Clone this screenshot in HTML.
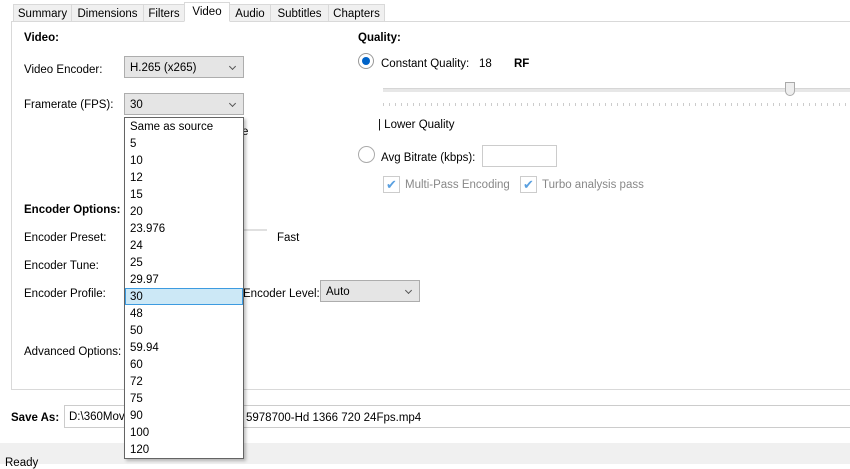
<!DOCTYPE html>
<html><head><style>
body{margin:0;width:850px;height:464px;background:#fff;font-family:"Liberation Sans",sans-serif;font-size:11.5px;color:#000;position:relative;overflow:hidden}
.a{position:absolute;white-space:nowrap}
.t{transform:translateY(2px)}
.tab{position:absolute;top:4px;height:17px;border:1px solid #d9d9d9;border-bottom:none;background:#f0f0f0;line-height:18px;text-align:center;box-sizing:border-box}
.sel{background:#fff;top:2px;height:20px;border-color:#d9d9d9}
.combo{position:absolute;height:22px;border:1px solid #adadad;background:#e5e5e5;box-sizing:border-box;line-height:22px;padding-left:5px}
.combo:after{content:"";position:absolute;right:8px;top:7px;width:4px;height:4px;border-right:1px solid #555;border-bottom:1px solid #555;transform:rotate(45deg)}
b{font-weight:bold}
.it{height:17px;line-height:18px;padding-left:5px;box-sizing:border-box}
</style></head><body>
<div class="a" style="left:11px;top:21px;width:850px;height:369px;border:1px solid #d9d9d9;box-sizing:border-box"></div>
<div class="tab" style="left:13px;width:59px">Summary</div>
<div class="tab" style="left:71px;width:73px">Dimensions</div>
<div class="tab" style="left:143px;width:42px">Filters</div>
<div class="tab sel" style="left:184px;width:46px;border-bottom:1px solid #fff">Video</div>
<div class="tab" style="left:229px;width:42px">Audio</div>
<div class="tab" style="left:270px;width:59px">Subtitles</div>
<div class="tab" style="left:328px;width:57px">Chapters</div>

<div class="a t" style="left:24px;top:30px"><b>Video:</b></div>
<div class="a t" style="left:24px;top:62px">Video Encoder:</div>
<div class="combo" style="left:124px;top:56px;width:120px">H.265 (x265)</div>
<div class="a t" style="left:24px;top:97px">Framerate (FPS):</div>
<div class="combo" style="left:124px;top:93px;width:120px">30</div>
<div class="a t" style="left:242px;top:124px">e</div>

<div class="a t" style="left:24px;top:202px"><b>Encoder Options:</b></div>
<div class="a t" style="left:24px;top:230px">Encoder Preset:</div>
<div class="a" style="left:243px;top:229px;width:24px;height:2px;background:#e0e0e0"></div>
<div class="a t" style="left:277px;top:230px">Fast</div>
<div class="a t" style="left:24px;top:258px">Encoder Tune:</div>
<div class="a t" style="left:24px;top:286px">Encoder Profile:</div>
<div class="a t" style="left:243px;top:286px">Encoder Level:</div>
<div class="combo" style="left:320px;top:280px;width:100px">Auto</div>
<div class="a t" style="left:24px;top:344px">Advanced Options:</div>

<div class="a t" style="left:358px;top:30px"><b>Quality:</b></div>
<div class="a" style="left:358px;top:53px;width:16px;height:16px;border:1px solid #999;border-radius:50%;box-sizing:border-box;background:#fff"><div style="position:absolute;left:3px;top:3px;width:8px;height:8px;border-radius:50%;background:#0063c8"></div></div>
<div class="a t" style="left:381px;top:56px">Constant Quality:</div>
<div class="a t" style="left:479px;top:56px">18</div>
<div class="a t" style="left:514px;top:56px"><b>RF</b></div>
<div class="a" style="left:383px;top:88px;width:467px;height:3px;background:#e7e7e7;border-top:1px solid #d6d6d6"></div>
<div class="a" style="left:785px;top:82px;width:10px;height:14px;background:#eee;border:1px solid #aaa;box-sizing:border-box;border-radius:0 0 5px 5px"></div>
<div class="a" style="left:383px;top:103px;width:467px;height:3px;background:repeating-linear-gradient(90deg,#ccc 0 1px,transparent 1px 6px)"></div>
<div class="a t" style="left:378px;top:117px">| Lower Quality</div>
<div class="a" style="left:358px;top:146px;width:17px;height:17px;border:1px solid #aaa;border-radius:50%;box-sizing:border-box"></div>
<div class="a t" style="left:381px;top:150px">Avg Bitrate (kbps):</div>
<div class="a" style="left:482px;top:145px;width:75px;height:22px;border:1px solid #ccc;box-sizing:border-box"></div>
<div class="a" style="left:383px;top:176px;width:17px;height:17px;border:1px solid #ccc;box-sizing:border-box;color:#5aa0e0;font-size:13px;line-height:15px;text-align:center">✔</div>
<div class="a t" style="left:405px;top:177px;color:#888">Multi-Pass Encoding</div>
<div class="a" style="left:520px;top:176px;width:17px;height:17px;border:1px solid #ccc;box-sizing:border-box;color:#5aa0e0;font-size:13px;line-height:15px;text-align:center">✔</div>
<div class="a t" style="left:542px;top:177px;color:#888">Turbo analysis pass</div>

<div class="a t" style="left:11px;top:410px"><b>Save As:</b></div>
<div class="a" style="left:64px;top:405px;width:800px;height:23px;border:1px solid #ccc;box-sizing:border-box;line-height:23px;padding-left:4px">D:\360Movi</div>
<div class="a t" style="left:246px;top:410px">5978700-Hd 1366 720 24Fps.mp4</div>
<div class="a" style="left:0;top:443px;width:850px;height:21px;background:#f0f0f0"></div>
<div class="a t" style="left:5px;top:455px">Ready</div>

<div class="a" style="left:124px;top:117px;width:120px;height:342px;border:1px solid #646464;background:#fff;box-sizing:border-box;box-shadow:2px 2px 3px rgba(0,0,0,.25)">
<div class="it">Same as source</div><div class="it">5</div><div class="it">10</div><div class="it">12</div><div class="it">15</div><div class="it">20</div><div class="it">23.976</div><div class="it">24</div><div class="it">25</div><div class="it">29.97</div>
<div class="it" style="background:#cce8f6;border:1px solid #3d9be0;padding-left:4px;line-height:16px">30</div>
<div class="it">48</div><div class="it">50</div><div class="it">59.94</div><div class="it">60</div><div class="it">72</div><div class="it">75</div><div class="it">90</div><div class="it">100</div><div class="it">120</div>
</div>
</body></html>
